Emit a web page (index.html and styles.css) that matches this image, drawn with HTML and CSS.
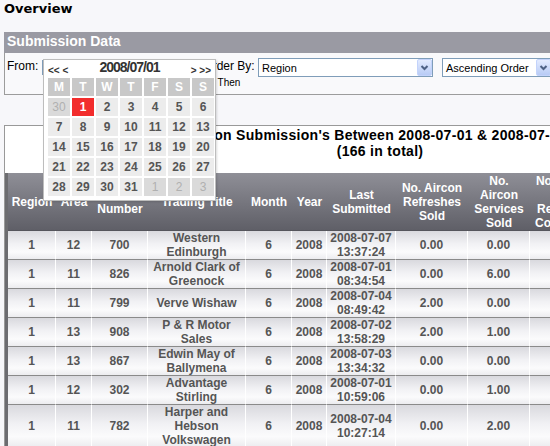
FILE: index.html
```html
<!DOCTYPE html>
<html lang="en">
<head>
  <meta charset="UTF-8">
  <meta name="viewport" content="width=device-width, initial-scale=1.0">
  <title>Overview</title>
  <link rel="stylesheet" href="styles.css">
</head>
<body>

  <h1 class="page-title">Overview</h1>

  <div class="panel">
    <div class="panel-head">Submission Data</div>
    <div class="filter-box">
      <div class="date-range">
        <span class="lbl">From:</span>
        <input type="text" class="date-input" value="2008/07/01">
        <span class="lbl to-lbl">To:</span>
        <input type="text" class="date-input" value="2008/07/31">
      </div>
      <div class="order-lbl">Order By:<span class="then">Then</span></div>
      <div class="select select-region">
        <span class="select-text">Region</span>
        <span class="select-btn"><svg width="13" height="13" viewBox="0 0 13 13"><path d="M3.5 5 L6.5 8 L9.5 5" fill="none" stroke="#4d6185" stroke-width="2"/></svg></span>
      </div>
      <div class="select select-order">
        <span class="select-text">Ascending Order</span>
        <span class="select-btn"><svg width="13" height="13" viewBox="0 0 13 13"><path d="M3.5 5 L6.5 8 L9.5 5" fill="none" stroke="#4d6185" stroke-width="2"/></svg></span>
      </div>

      <!-- date picker popup for the From field -->
      <div class="calendar">
        <div class="cal-head">
          <span class="cal-nav">&lt;&lt; &lt;</span>
          <span class="cal-title">2008/07/01</span>
          <span class="cal-nav">&gt; &gt;&gt;</span>
        </div>
        <div class="cal-grid">
          <span class="dow">M</span><span class="dow">T</span><span class="dow">W</span><span class="dow">T</span><span class="dow">F</span><span class="dow">S</span><span class="dow">S</span>
          <span class="other">30</span><span class="sel">1</span><span>2</span><span>3</span><span>4</span><span>5</span><span>6</span>
          <span>7</span><span>8</span><span>9</span><span>10</span><span>11</span><span>12</span><span>13</span>
          <span>14</span><span>15</span><span>16</span><span>17</span><span>18</span><span>19</span><span>20</span>
          <span>21</span><span>22</span><span>23</span><span>24</span><span>25</span><span>26</span><span>27</span>
          <span>28</span><span>29</span><span>30</span><span>31</span><span class="other">1</span><span class="other">2</span><span class="other">3</span>
        </div>
      </div>
    </div>
  </div>

  <div class="results">
    <h2 class="results-title">Aircon Submission's Between 2008-07-01 &amp; 2008-07-31<br>(166 in total)</h2>
    <table class="data-table">
      <colgroup>
        <col style="width:48px"><col style="width:36px"><col style="width:56px"><col style="width:98px">
        <col style="width:46px"><col style="width:35px"><col style="width:69px"><col style="width:72px">
        <col style="width:62px"><col style="width:72px"><col>
      </colgroup>
      <thead>
        <tr>
          <th>Region</th>
          <th>Area</th>
          <th>Dealer<br>Number</th>
          <th>Trading Title</th>
          <th>Month</th>
          <th>Year</th>
          <th>Last<br>Submitted</th>
          <th>No. Aircon<br>Refreshes<br>Sold</th>
          <th>No.<br>Aircon<br>Services<br>Sold</th>
          <th>No. Aircon<br>Kits<br>Refreshes<br>Completed</th>
          <th>Comments</th>
        </tr>
      </thead>
      <tbody>
        <tr><td>1</td><td>12</td><td>700</td><td>Western Edinburgh</td><td>6</td><td>2008</td><td>2008-07-07 13:37:24</td><td>0.00</td><td>0.00</td><td>0.00</td><td></td></tr>
        <tr><td>1</td><td>11</td><td>826</td><td>Arnold Clark of Greenock</td><td>6</td><td>2008</td><td>2008-07-01 08:34:54</td><td>0.00</td><td>6.00</td><td>0.00</td><td></td></tr>
        <tr><td>1</td><td>11</td><td>799</td><td>Verve Wishaw</td><td>6</td><td>2008</td><td>2008-07-04 08:49:42</td><td>2.00</td><td>0.00</td><td>0.00</td><td></td></tr>
        <tr><td>1</td><td>13</td><td>908</td><td>P &amp; R Motor Sales</td><td>6</td><td>2008</td><td>2008-07-02 13:58:29</td><td>2.00</td><td>1.00</td><td>0.00</td><td></td></tr>
        <tr><td>1</td><td>13</td><td>867</td><td>Edwin May of Ballymena</td><td>6</td><td>2008</td><td>2008-07-03 13:34:32</td><td>0.00</td><td>0.00</td><td>0.00</td><td></td></tr>
        <tr><td>1</td><td>12</td><td>302</td><td>Advantage Stirling</td><td>6</td><td>2008</td><td>2008-07-01 10:59:06</td><td>0.00</td><td>1.00</td><td>0.00</td><td></td></tr>
        <tr><td>1</td><td>11</td><td>782</td><td>Harper and Hebson Volkswagen</td><td>6</td><td>2008</td><td>2008-07-04 10:27:14</td><td>0.00</td><td>2.00</td><td>0.00</td><td></td></tr>
        <tr><td>1</td><td>12</td><td>715</td><td>Lookers Belfast</td><td>6</td><td>2008</td><td>2008-07-02 09:12:40</td><td>1.00</td><td>0.00</td><td>0.00</td><td></td></tr>
      </tbody>
    </table>
  </div>

</body>
</html>
```

FILE: styles.css
```css
    html, body {
      overflow: hidden;
    }
    body {
      margin: 0;
      padding: 0 0 0 4px;
      background-color: #f7f7fa;
      font-family: "Liberation Sans", Arial, sans-serif;
      font-size: 12px;
      color: #000;
    }
    .page-title {
      font-family: "DejaVu Sans", Verdana, sans-serif;
      font-size: 13px;
      font-weight: bold;
      line-height: 17px;
      margin: 0 0 15px;
    }
    .panel {
      width: 760px;
    }
    .panel-head {
      background-color: #9a9aa3;
      color: white;
      font-size: 14px;
      font-weight: bold;
      line-height: 19px;
      padding: 0 0 2px 3px;
    }
    .filter-box {
      position: relative;
      display: flex;
      align-items: flex-start;
      height: 36px;
      padding: 5px 0 0 2px;
      border: 1px solid #9c9c9c;
      border-top: none;
      background-color: #f9f9fb;
    }
    .date-range {
      display: flex;
      align-items: flex-start;
      width: 195px;
    }
    .lbl {
      line-height: 14px;
      margin-top: 1px;
    }
    .to-lbl {
      margin-left: 6px;
    }
    .date-input {
      width: 58px;
      height: 13px;
      margin: 2px 0 0 4px;
      padding: 0 2px;
      border: 1px solid #7f9db9;
      font-size: 11px;
      font-family: inherit;
    }
    .order-lbl {
      width: 54px;
      text-align: center;
      line-height: 14px;
      margin-top: 1px;
    }
    .then {
      display: block;
      font-size: 10px;
      line-height: 12px;
      margin-top: 4px;
    }
    .select {
      display: flex;
      align-items: center;
      box-sizing: border-box;
      height: 19px;
      margin-left: 2px;
      border: 1px solid #7f9db9;
      background-color: white;
      font-size: 11px;
    }
    .select-region {
      width: 175px;
    }
    .select-order {
      width: 110px;
      margin-left: 9px;
    }
    .select-text {
      flex: 1;
      padding-left: 3px;
      white-space: nowrap;
    }
    .select-btn {
      display: flex;
      align-items: center;
      justify-content: center;
      box-sizing: border-box;
      width: 15px;
      height: 17px;
      border: 1px solid #c3d3fb;
      border-radius: 2px;
      background: linear-gradient(#e3ebff, #b8cbf5);
    }

    /* calendar popup */
    .calendar {
      position: absolute;
      left: 38px;
      top: 6px;
      z-index: 10;
      width: 166px;
      padding: 0 1px 4px 4px;
      border: 1px solid #bdbdbd;
      background-color: white;
      box-shadow: 1px 1px 2px rgba(0, 0, 0, 0.15);
    }
    .cal-head {
      display: flex;
      justify-content: space-between;
      align-items: flex-start;
      height: 18px;
      padding-right: 3px;
    }
    .cal-nav {
      font-size: 10px;
      font-weight: bold;
      line-height: 12px;
      padding-top: 5px;
      color: #333;
    }
    .cal-title {
      font-size: 14px;
      font-weight: bold;
      letter-spacing: -1px;
      line-height: 15px;
      color: #333;
    }
    .cal-grid {
      display: grid;
      grid-template-columns: repeat(7, 22px);
      grid-auto-rows: 18px;
      gap: 2px;
    }
    .cal-grid span {
      display: flex;
      align-items: center;
      justify-content: center;
      background-color: #ececec;
      color: #555;
      font-weight: bold;
    }
    .cal-grid .dow {
      background-color: #c8c8c8;
      color: white;
    }
    .cal-grid .other {
      background-color: #dadada;
      color: #b0b0b0;
      font-weight: normal;
    }
    .cal-grid .sel {
      background-color: #f22d2d;
      color: white;
    }

    /* results */
    .results {
      width: 750px;
      margin-top: 30px;
      border-top: 1px solid #999;
      border-left: 1px solid #999;
      background-color: white;
    }
    .results-title {
      margin: 0 0 14px;
      padding-top: 1px;
      font-size: 14px;
      line-height: 16px;
      letter-spacing: 0.3px;
      text-indent: -8px;
      text-align: center;
    }
    .data-table {
      width: 100%;
      table-layout: fixed;
      border-collapse: separate;
      border-spacing: 0;
      border-left: 3px solid #6c6c70;
    }
    .data-table th {
      padding: 1px 2px 0;
      background: linear-gradient(#8f8f97, #5f5f67);
      border-bottom: 1px solid #55555c;
      color: white;
      font-size: 12px;
      line-height: 14px;
      vertical-align: middle;
    }
    .data-table td {
      padding: 0 2px;
      background: linear-gradient(#d9d9de 0%, #f1f1f4 45%, #fbfbfc 75%, #ececef 100%);
      border-right: 1px solid white;
      border-bottom: 1px solid #8a8a8a;
      color: #555;
      font-weight: bold;
      line-height: 14px;
      text-align: center;
    }
```
